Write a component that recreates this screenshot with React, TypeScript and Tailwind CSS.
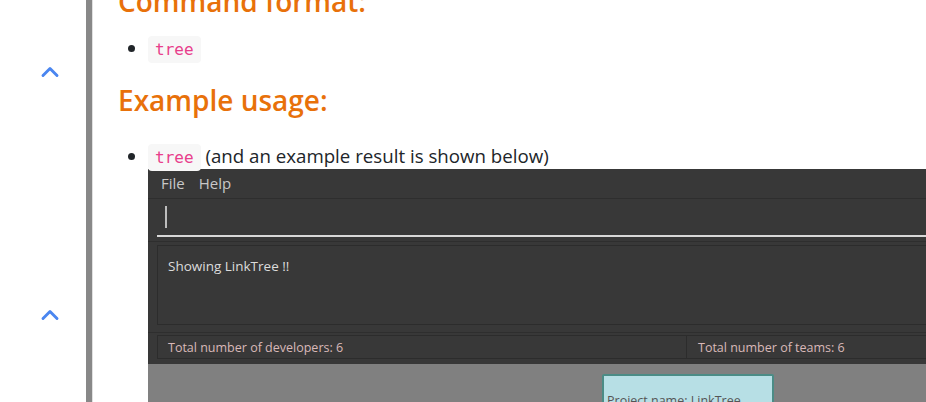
import { ChevronUp } from "lucide-react";

function Code({ children }: { children: string }) {
  return (
    <code className="rounded-[4px] bg-[#f7f7f7] px-[7px] py-[4px] font-['DejaVu_Sans_Mono',monospace] text-[16px] text-[#e83e8c]">
      {children}
    </code>
  );
}

function AppWindow() {
  return (
    <div className="mt-[-2px] h-[240px] w-[800px] shrink-0 overflow-hidden bg-[#383838] font-['Open_Sans',sans-serif]">
      {/* menu bar */}
      <div className="flex h-[30px] items-center gap-[14px] border-b border-[#2e2e2e] px-[13px] text-[15px] text-[#c8c8c8]">
        <span>File</span>
        <span>Help</span>
      </div>
      {/* command box */}
      <div className="border-b border-[#2e2e2e] px-[9px] pb-[4px]">
        <div className="flex h-[38px] items-center border-b-[2px] border-[#d8d8d8] pl-[8px]">
          <div className="h-[22px] w-[2px] bg-[#bdbdbd]" />
        </div>
      </div>
      {/* result display */}
      <div className="border-b border-[#2e2e2e] px-[9px] pb-[7px] pt-[3px]">
        <div className="h-[80px] border border-[#2c2c2c] px-[10px] pt-[7px] text-[13.5px] text-[#dcdcdc]">
          Showing LinkTree !!
        </div>
      </div>
      {/* status bar */}
      <div className="flex px-[9px] pb-[5px] pt-[2px] text-[12.5px] text-[#d9b8b8]">
        <div className="flex h-[24px] w-[530px] shrink-0 items-center border border-[#2c2c2c] px-[10px]">
          Total number of developers: 6
        </div>
        <div className="flex h-[24px] flex-1 items-center border border-l-0 border-[#2c2c2c] px-[11px]">
          Total number of teams: 6
        </div>
      </div>
      {/* tree view */}
      <div className="h-[60px] bg-[#808080] pl-[454px] pt-[10px]">
        <div className="h-[60px] w-[172px] rounded-[2px] border-[2px] border-[#4b8c86] bg-[#b7dfe5] px-[3px] pt-[11px] text-[12.5px] text-[#555]">
          Project name: LinkTree
        </div>
      </div>
    </div>
  );
}

export default function App() {
  return (
    <div className="flex h-[402px] w-[926px] overflow-hidden bg-white font-['Open_Sans',sans-serif] text-[#212529]">
      <div className="flex w-[86px] shrink-0 flex-col items-center pl-[14px] pt-[58px]">
        <ChevronUp className="h-[28px] w-[28px] text-[#4a86f0]" strokeWidth={2.5} />
        <div className="h-[215px]" />
        <ChevronUp className="h-[28px] w-[28px] text-[#4a86f0]" strokeWidth={2.5} />
      </div>
      <div className="w-[6px] shrink-0 bg-[#888888]" />
      <div className="w-[1px] shrink-0 bg-[#e0e0e0]" />
      <div className="min-w-0 flex-1 overflow-hidden pl-[25px]">
        <h2 className="mt-[-18px] whitespace-nowrap text-[28px] font-semibold leading-[38px] text-[#e8710a]">Command format:</h2>
        <ul className="mt-[14px] list-disc pl-[30px] text-[18.7px] leading-[27px]">
          <li>
            <Code>tree</Code>
          </li>
        </ul>
        <h2 className="mt-[18px] text-[28px] font-semibold leading-[38px] text-[#e8710a]">Example usage:</h2>
        <ul className="mt-[23px] list-disc pl-[30px] text-[18.7px] leading-[27px]">
          <li>
            <span className="whitespace-nowrap">
              <Code>tree</Code> (and an example result is shown below)
            </span>
            <AppWindow />
          </li>
        </ul>
      </div>
    </div>
  );
}
